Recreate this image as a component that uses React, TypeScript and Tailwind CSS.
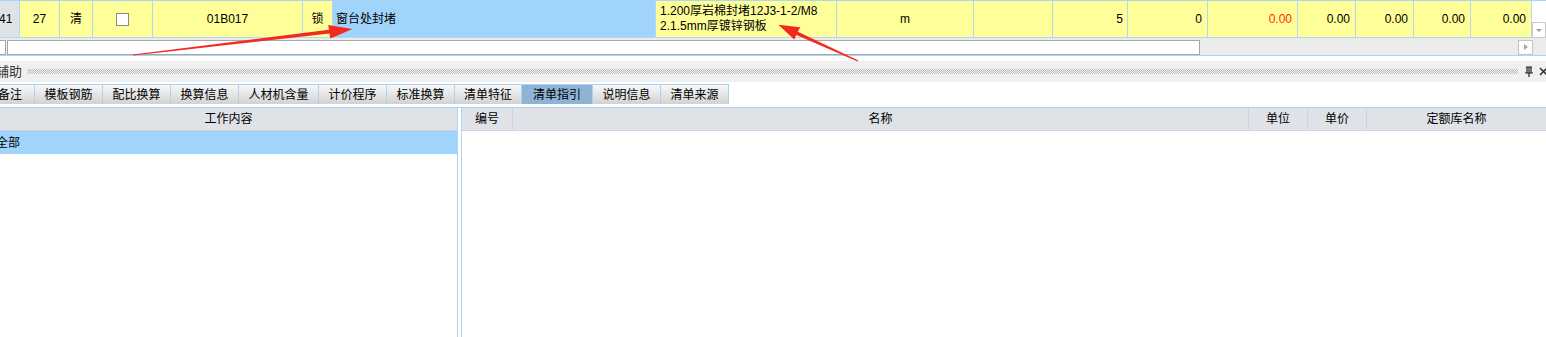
import React from 'react';

const FONT = "font-['Liberation_Sans','Noto_Sans_CJK_SC',sans-serif]";

interface Cell {
  w: string;
  bg: string;
  align: string;
  content?: React.ReactNode;
}

const cells: Cell[] = [
  { w: 'w-[20px]', bg: 'bg-[#dfe2e6]', align: 'justify-start', content: <span className="-ml-[1px]">41</span> },
  { w: 'w-[40px]', bg: 'bg-[#ffff99]', align: 'justify-center', content: '27' },
  { w: 'w-[33px]', bg: 'bg-[#ffff99]', align: 'justify-center', content: '清' },
  {
    w: 'w-[60px]',
    bg: 'bg-[#ffff99]',
    align: 'justify-center',
    content: <span className="block h-[13px] w-[13px] border border-[#8a8a8a] bg-white" />,
  },
  { w: 'w-[150px]', bg: 'bg-[#ffff99]', align: 'justify-center', content: '01B017' },
  { w: 'w-[30px]', bg: 'bg-[#ffff99]', align: 'justify-center', content: '锁' },
  { w: 'w-[323px]', bg: 'bg-[#a0d4fa]', align: 'justify-start pl-[3px]', content: '窗台处封堵' },
  {
    w: 'w-[181px]',
    bg: 'bg-[#ffff99]',
    align: 'justify-start pl-[4px]',
    content: (
      <div className="leading-[15px]">
        <div>1.200厚岩棉封堵12J3-1-2/M8</div>
        <div>2.1.5mm厚镀锌钢板</div>
      </div>
    ),
  },
  { w: 'w-[137px]', bg: 'bg-[#ffff99]', align: 'justify-center', content: 'm' },
  { w: 'w-[79px]', bg: 'bg-[#ffff99]', align: 'justify-end pr-[4px]' },
  { w: 'w-[75px]', bg: 'bg-[#ffff99]', align: 'justify-end pr-[4px]', content: '5' },
  { w: 'w-[80px]', bg: 'bg-[#ffff99]', align: 'justify-end pr-[5px]', content: '0' },
  { w: 'w-[90px]', bg: 'bg-[#ffff99]', align: 'justify-end pr-[5px] text-[#ff2a00]', content: '0.00' },
  { w: 'w-[58px]', bg: 'bg-[#ffff99]', align: 'justify-end pr-[5px]', content: '0.00' },
  { w: 'w-[58px]', bg: 'bg-[#ffff99]', align: 'justify-end pr-[5px]', content: '0.00' },
  { w: 'w-[57px]', bg: 'bg-[#ffff99]', align: 'justify-end pr-[5px]', content: '0.00' },
  { w: 'w-[61px]', bg: 'bg-[#ffff99]', align: 'justify-end pr-[5px]', content: '0.00' },
];

const tabs = [
  { label: '备注', w: 'w-[35px]', shift: true },
  { label: '模板钢筋', w: 'w-[68px]' },
  { label: '配比换算', w: 'w-[68px]' },
  { label: '换算信息', w: 'w-[68px]' },
  { label: '人材机含量', w: 'w-[80px]' },
  { label: '计价程序', w: 'w-[68px]' },
  { label: '标准换算', w: 'w-[68px]' },
  { label: '清单特征', w: 'w-[67px]' },
  { label: '清单指引', w: 'w-[71px]', active: true },
  { label: '说明信息', w: 'w-[68px]' },
  { label: '清单来源', w: 'w-[68px]' },
];

const rightCols = [
  { label: '编号', w: 'w-[51px]' },
  { label: '名称', w: 'w-[736px]' },
  { label: '单位', w: 'w-[59px]' },
  { label: '单价', w: 'w-[59px]' },
  { label: '定额库名称', w: 'flex-1' },
];

function Arrows() {
  return (
    <svg className="pointer-events-none absolute left-0 top-0" width="1546" height="80">
      <polygon
        fill="#f22a1f"
        points="133,55.6 329.4,33.5 330.4,38.4 352.5,29 328.2,24.9 329,29.8 133,54.5"
      />
      <polygon
        fill="#f22a1f"
        points="858.4,60.5 797.9,31.7 800.2,27.2 778.3,24.7 794.2,39.6 796.4,34.9 857.6,61.5"
      />
    </svg>
  );
}

export default function App() {
  return (
    <div className={`relative h-[337px] w-[1546px] overflow-hidden bg-white text-[12px] text-black ${FONT}`}>
      {/* data row */}
      <div className="flex border-t border-[#aad5f5]">
        <div className="flex w-[1532px]">
          {cells.map((c, i) => (
            <div
              key={i}
              className={`flex h-[37px] shrink-0 items-center overflow-hidden whitespace-nowrap border-b border-r border-[#b3d8f5] ${c.w} ${c.bg} ${c.align}`}
            >
              {c.content}
            </div>
          ))}
        </div>
        <div className="flex w-[14px] flex-col bg-white">
          <div className="h-[21px]" />
          <div className="flex h-[16px] items-center justify-center border border-[#c8c8c8] bg-white">
            <span className="h-0 w-0 border-x-[3px] border-t-[3px] border-x-transparent border-t-[#a0a0a0]" />
          </div>
        </div>
      </div>

      {/* horizontal scrollbar */}
      <div className="flex h-[17px] items-center bg-[#ececec] pt-[1px]">
        <div className="h-[15px] w-[6px] border border-l-0 border-[#a8a8a8] bg-white" />
        <div className="ml-[1px] h-[15px] w-[1193px] border border-[#a8a8a8] bg-white" />
        <div className="flex-1" />
        <div className="flex h-[15px] w-[15px] items-center justify-center border border-[#c4c4c4] bg-white">
          <span className="h-0 w-0 border-y-[3px] border-l-[4px] border-y-transparent border-l-[#a8a8a8]" />
        </div>
        <div className="w-[13px]" />
      </div>
      <div className="h-[2px] border-t border-[#aad5f5]" />

      {/* panel title */}
      <div className="mt-[4px] flex h-[21px] items-center overflow-hidden whitespace-nowrap bg-[#f0f0f0]">
        <span className="-ml-[4px] shrink-0 text-[13px] text-[#333]">辅助</span>
        <div className="ml-[5px] h-[5px] w-[1491px] shrink-0 bg-[repeating-conic-gradient(#bdbdbd_0_25%,transparent_0_50%)] bg-[length:2px_2px]" />
        <svg className="ml-[6px] shrink-0" width="10" height="12" viewBox="0 0 10 12">
          <path d="M2 1h6M3 1v6M7 1v6M5 1v6M1 7h8M5 7v4" stroke="#222" strokeWidth="1.2" fill="none" />
        </svg>
        <svg className="ml-[5px] shrink-0" width="9" height="9" viewBox="0 0 9 9">
          <path d="M1 1l7 7M8 1l-7 7" stroke="#222" strokeWidth="1.4" />
        </svg>
      </div>

      {/* tabs */}
      <div className="mt-[2px] flex h-[20px]">
        {tabs.map((t) => (
          <div
            key={t.label}
            className={`flex shrink-0 items-center overflow-hidden whitespace-nowrap border-r border-t border-[#a6d2f4] ${t.w} ${
              t.shift ? 'justify-start' : 'justify-center'
            } ${t.active ? 'bg-[#8fb3d4]' : 'bg-gradient-to-b from-[#f8f8f8] to-[#d2d2d2]'}`}
          >
            <span className={t.shift ? '-ml-[2px]' : ''}>{t.label}</span>
          </div>
        ))}
      </div>

      {/* lower panels */}
      <div className="mt-[3px] flex h-[230px] border-t border-[#aad5f5]">
        <div className="flex w-[458px] flex-col border-r border-[#aad5f5]">
          <div className="flex h-[23px] items-center justify-center border-b border-[#c9d6e3] bg-[#dfe2e6]">
            工作内容
          </div>
          <div className="flex h-[23px] items-center overflow-hidden whitespace-nowrap bg-[#a0d4fa]">
            <span className="-ml-[4px]">全部</span>
          </div>
        </div>
        <div className="w-[3px]" />
        <div className="flex flex-1 flex-col border-l border-[#aad5f5]">
          <div className="flex h-[23px] border-b border-[#c9d6e3] bg-[#dfe2e6]">
            {rightCols.map((c, i) => (
              <div
                key={c.label}
                className={`flex shrink-0 items-center justify-center ${c.w} ${
                  i < rightCols.length - 1 ? 'border-r border-[#c5d6e6]' : ''
                }`}
              >
                {c.label}
              </div>
            ))}
          </div>
        </div>
      </div>

      <Arrows />
    </div>
  );
}
